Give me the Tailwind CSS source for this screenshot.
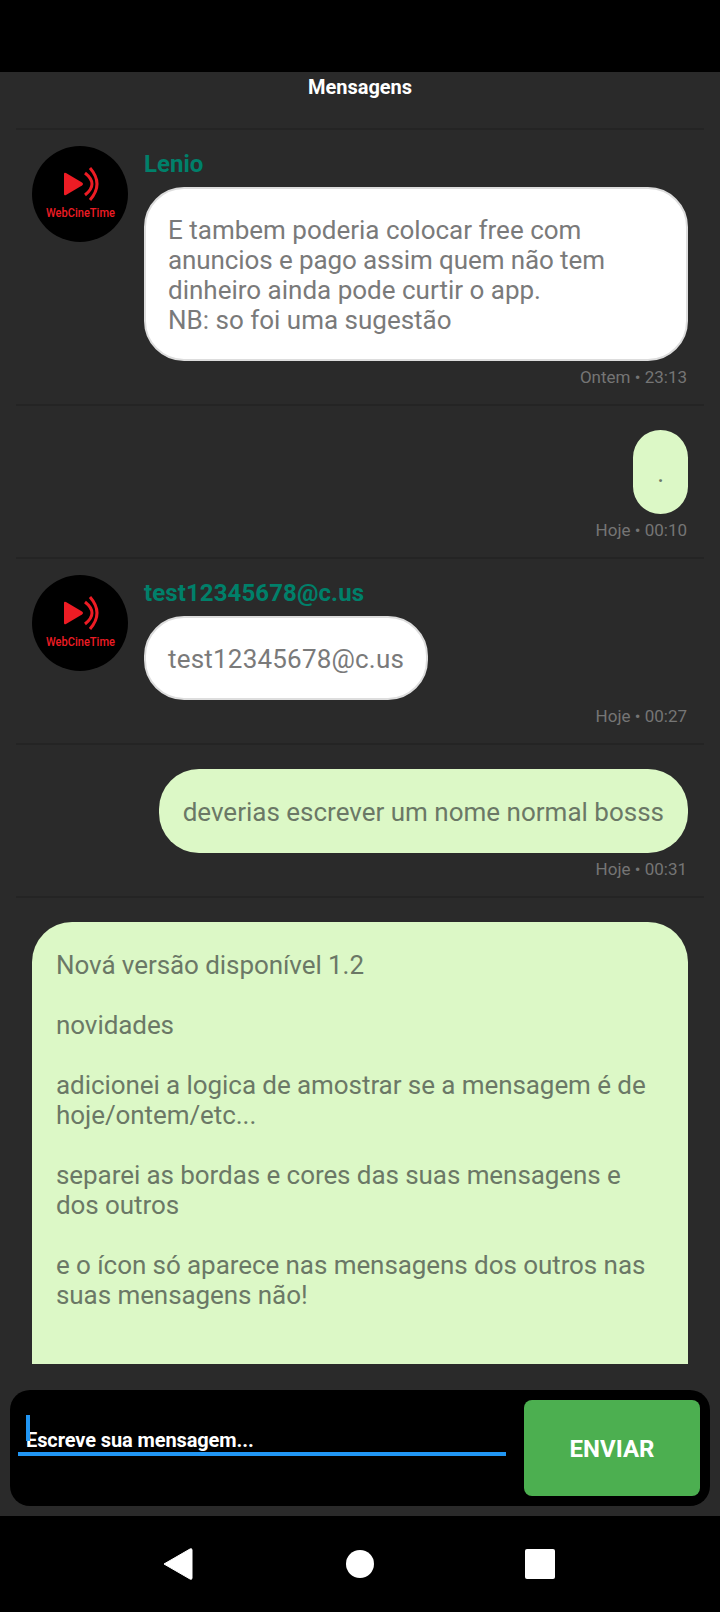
<!DOCTYPE html>
<html lang="en">
<head>
    <meta charset="UTF-8">
    <meta name="viewport" content="width=device-width, initial-scale=1.0">
    <title>Mensagens</title>
    <script src="https://cdn.jsdelivr.net/npm/@tailwindcss/browser@4"></script>
</head>
<body class="bg-black font-['Roboto',sans-serif]">
    <div class="w-[720px] h-[1612px] flex flex-col overflow-hidden">
        <!-- Status bar -->
        <div class="h-[72px] bg-black shrink-0"></div>

        <div class="h-[1444px] bg-[#2a2a2a] flex flex-col shrink-0">
            <h1 class="h-[56px] shrink-0 pt-[2px] text-center text-white font-bold text-[20px] leading-[26px]">Mensagens</h1>

            <!-- Message list -->
            <div class="h-[1236px] shrink-0 overflow-hidden">
                <div class="mx-4 border-t-2 border-[#242424]"></div>

                <div class="flex px-4 pt-4">
                    <div class="w-[128px] pl-4 shrink-0">
                        <svg class="w-[96px] h-[96px]" viewBox="0 0 96 96">
                            <circle cx="48" cy="48" r="48" fill="#000"/>
                            <path d="M32 28 Q32 26 34 27 L50 36.500 Q52 38 50 39.500 L34 49 Q32 50 32 48 Z" fill="#ed1c24"/>
                            <path d="M53 27 Q67 38 53 49" stroke="#ed1c24" stroke-width="3" fill="none"/>
                            <path d="M58 22 Q72 38 58 54" stroke="#ed1c24" stroke-width="3" fill="none"/>
                            <text x="48.500" y="71" text-anchor="middle" textLength="69" lengthAdjust="spacingAndGlyphs" fill="#ed1c24" font-family="Roboto" font-weight="500" font-size="13">WebCineTime</text>
                        </svg>
                    </div>
                    <div class="flex-1 flex flex-col items-start pr-4">
                        <div class="h-[41px] text-[24px] leading-[36px] font-bold text-[#00806a]">Lenio</div>
                        <div class="w-full bg-white border-2 border-[#dddddd] rounded-[40px] px-[22px] pt-[26px] pb-[24px] text-[26px] leading-[30px] text-[#7a7a7a]">
                            E tambem poderia colocar free com<br><span class="tracking-[-0.1px]">anuncios e pago assim quem não tem</span><br>dinheiro ainda pode curtir o app.<br>NB: so foi uma sugestão
                        </div>
                        <div class="self-end h-[43px] pt-[5px] pr-[1px] text-[17px] leading-[22px] text-[#757575]">Ontem • 23:13</div>
                    </div>
                </div>

                <div class="mx-4 border-t-2 border-[#242424]"></div>

                <div class="flex flex-col items-end px-8 pt-6">
                    <div class="bg-[#dcf8c6] rounded-[40px] px-6 pt-[28px] pb-[26px] text-[26px] leading-[30px] text-[#6b7866]">.</div>
                    <div class="h-[43px] pt-[5px] pr-[1px] text-[17px] leading-[22px] text-[#757575]">Hoje • 00:10</div>
                </div>

                <div class="mx-4 border-t-2 border-[#242424]"></div>

                <div class="flex px-4 pt-4">
                    <div class="w-[128px] pl-4 shrink-0">
                        <svg class="w-[96px] h-[96px]" viewBox="0 0 96 96">
                            <circle cx="48" cy="48" r="48" fill="#000"/>
                            <path d="M32 28 Q32 26 34 27 L50 36.500 Q52 38 50 39.500 L34 49 Q32 50 32 48 Z" fill="#ed1c24"/>
                            <path d="M53 27 Q67 38 53 49" stroke="#ed1c24" stroke-width="3" fill="none"/>
                            <path d="M58 22 Q72 38 58 54" stroke="#ed1c24" stroke-width="3" fill="none"/>
                            <text x="48.500" y="71" text-anchor="middle" textLength="69" lengthAdjust="spacingAndGlyphs" fill="#ed1c24" font-family="Roboto" font-weight="500" font-size="13">WebCineTime</text>
                        </svg>
                    </div>
                    <div class="flex-1 flex flex-col items-start pr-4">
                        <div class="h-[41px] text-[24px] leading-[36px] tracking-[0.1px] font-bold text-[#00806a]">test12345678@c.us</div>
                        <div class="bg-white border-2 border-[#dddddd] rounded-[40px] px-[22px] pt-[26px] pb-[24px] text-[26px] leading-[30px] tracking-[0.2px] text-[#7a7a7a]">test12345678@c.us</div>
                        <div class="self-end h-[43px] pt-[5px] pr-[1px] text-[17px] leading-[22px] text-[#757575]">Hoje • 00:27</div>
                    </div>
                </div>

                <div class="mx-4 border-t-2 border-[#242424]"></div>

                <div class="flex flex-col items-end px-8 pt-6">
                    <div class="bg-[#dcf8c6] rounded-[40px] px-6 pt-[28px] pb-[26px] text-[26px] leading-[30px] text-[#6b7866]">deverias escrever um nome normal bosss</div>
                    <div class="h-[43px] pt-[5px] pr-[1px] text-[17px] leading-[22px] text-[#757575]">Hoje • 00:31</div>
                </div>

                <div class="mx-4 border-t-2 border-[#242424]"></div>

                <div class="flex flex-col items-end px-8 pt-6">
                    <div class="w-[656px] h-[600px] bg-[#dcf8c6] rounded-[40px] px-6 pt-[28px] text-[26px] leading-[30px] tracking-[-0.07px] text-[#6b7866]">
                        Nová versão disponível 1.2<br><br>novidades<br><br>adicionei a logica de amostrar se a mensagem é de<br>hoje/ontem/etc...<br><br>separei as bordas e cores das suas mensagens e<br>dos outros<br><br>e o ícon só aparece nas mensagens dos outros nas<br>suas mensagens não!
                    </div>
                </div>
            </div>

            <!-- Input bar -->
            <div class="mt-[26px] mx-[10px] h-[116px] shrink-0 bg-black rounded-[20px] flex items-start pt-[10px] pr-[10px] pl-2">
                <div class="w-[488px] h-[55px] border-b-4 border-[#2196f3] relative pl-2 mt-[1px]">
                    <span class="absolute left-2 top-[14px] w-1 h-[26px] bg-[#2196f3]"></span>
                    <div class="pt-[27px] text-[20px] leading-[24px] tracking-[-0.1px] font-bold text-white">Escreve sua mensagem...</div>
                </div>
                <button class="ml-[18px] w-[176px] h-[96px] pt-[2px] bg-[#4caf50] rounded-lg text-white font-bold text-[24px]">ENVIAR</button>
            </div>
        </div>

        <!-- Nav bar -->
        <div class="flex-1 bg-black flex items-center">
            <svg class="w-[720px] h-[96px]" viewBox="0 0 720 96">
                <path d="M164 48 L190 33 Q192 32 192 34 L192 62 Q192 64 190 63 Z" fill="#fff" stroke="#fff" stroke-linejoin="round"/>
                <circle cx="360" cy="48" r="14" fill="#fff"/>
                <rect x="525" y="33" width="30" height="30" rx="2" fill="#fff"/>
            </svg>
        </div>
    </div>
</body>
</html>
